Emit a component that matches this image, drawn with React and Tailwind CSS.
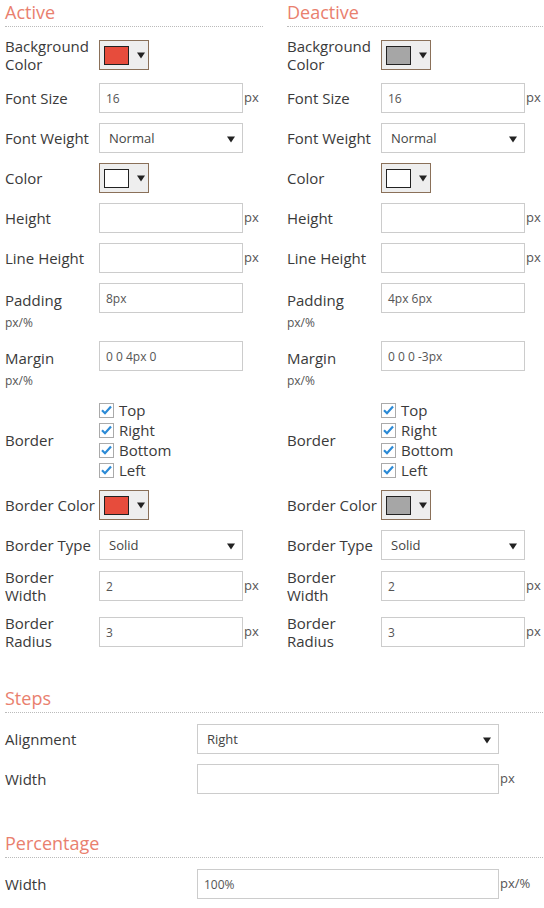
const font = { fontFamily: '"Open Sans", "Noto Sans", sans-serif' };

function Heading({ children }) {
  return (
    <div className="border-b border-dotted border-[#bbb] pb-[3px] pt-[1px]">
      <div className="text-[18px] leading-[22px] text-[#e9806e]">{children}</div>
    </div>
  );
}

function Row({ label, sub, children, top, className = '' }) {
  return (
    <div className={`flex ${top ? 'items-start' : 'items-center'} min-h-[30px] ${className}`}>
      <div className={`w-[94px] shrink-0 ${top ? 'pt-[8px]' : ''}`}>
        <div className="text-[15px] leading-[18px] text-[#3a3a3a]">{label}</div>
        {sub && <div className="mt-[6px] text-[12px] leading-[16px] text-[#555]">{sub}</div>}
      </div>
      {children}
    </div>
  );
}

function Arrow() {
  return (
    <svg width="8" height="8" viewBox="0 0 8 8">
      <path d="M0 1.5 L8 1.5 L4 7.5 Z" fill="#222" />
    </svg>
  );
}

function Picker({ color }) {
  return (
    <div className="flex h-[30px] w-[50px] items-center border border-[#8a7059] bg-[#eeeeee] pl-[4px]">
      <div className="h-[19px] w-[25px] border border-[#222]" style={{ background: color }} />
      <div className="ml-[8px] flex items-center">
        <Arrow />
      </div>
    </div>
  );
}

function Input({ value, unit, wide }) {
  return (
    <div className="flex items-center">
      <div
        className={`flex h-[30px] ${wide ? 'w-[302px]' : 'w-[144px]'} items-center border border-[#ccc] bg-white px-[6px] pt-[1px] text-[12px] text-[#555]`}
      >
        {value}
      </div>
      {unit && <span className="pl-[1px] text-[13px] text-[#555]">{unit}</span>}
    </div>
  );
}

function Select({ value, wide }) {
  return (
    <div
      className={`flex h-[30px] ${wide ? 'w-[302px]' : 'w-[144px]'} items-center justify-between border border-[#ccc] bg-white pl-[9px] pr-[7px] pt-[2px] text-[13px] text-[#444]`}
    >
      <span>{value}</span>
      <Arrow />
    </div>
  );
}

function Check({ label }) {
  return (
    <div className="flex h-[20px] items-center">
      <div className="flex h-[15px] w-[15px] items-center justify-center border border-[#aaa] bg-white">
        <svg width="11" height="10" viewBox="0 0 11 10">
          <path d="M1 5.2 L4 8.2 L10 1.5" fill="none" stroke="#2b8ad6" strokeWidth="2.2" />
        </svg>
      </div>
      <span className="ml-[5px] text-[15px] leading-[18px] text-[#3a3a3a]">{label}</span>
    </div>
  );
}

function Column({ title, color, padding, margin }) {
  return (
    <div>
      <Heading>{title}</Heading>
      <div className="mt-[10px] flex flex-col gap-[10px]">
        <Row label={<>Background<br />Color</>}>
          <Picker color={color} />
        </Row>
        <Row label="Font Size">
          <Input value="16" unit="px" />
        </Row>
        <Row label="Font Weight">
          <Select value="Normal" />
        </Row>
        <Row label="Color">
          <Picker color="#ffffff" />
        </Row>
        <Row label="Height">
          <Input value="" unit="px" />
        </Row>
        <Row label="Line Height">
          <Input value="" unit="px" />
        </Row>
        <Row label="Padding" sub="px/%" top>
          <Input value={padding} />
        </Row>
        <Row label="Margin" sub="px/%" top>
          <Input value={margin} />
        </Row>
        <div className="pt-[1px]">
          <Row label="Border">
            <div className="flex flex-col">
              <Check label="Top" />
              <Check label="Right" />
              <Check label="Bottom" />
              <Check label="Left" />
            </div>
          </Row>
        </div>
        <Row label="Border Color">
          <Picker color={color} />
        </Row>
        <Row label="Border Type">
          <Select value="Solid" />
        </Row>
        <Row label={<>Border<br />Width</>} className="-mt-[2px]">
          <Input value="2" unit="px" />
        </Row>
        <Row label={<>Border<br />Radius</>}>
          <Input value="3" unit="px" />
        </Row>
      </div>
    </div>
  );
}

function WideRow({ label, children }) {
  return (
    <div className="flex h-[30px] items-center">
      <div className="w-[192px] shrink-0 text-[15px] text-[#3a3a3a]">{label}</div>
      {children}
    </div>
  );
}

export default function App() {
  return (
    <div className="min-h-[908px] bg-white pl-[5px] pr-[1px]" style={font}>
      <div className="grid grid-cols-[258px_256px] gap-x-[24px]">
        <Column title="Active" color="#e74c3c" padding="8px" margin="0 0 4px 0" />
        <Column title="Deactive" color="#a6a6a6" padding="4px 6px" margin="0 0 0 -3px" />
      </div>

      <div className="mt-[36px]">
        <Heading>Steps</Heading>
        <div className="mt-[11px] flex flex-col gap-[10px]">
          <WideRow label="Alignment">
            <Select value="Right" wide />
          </WideRow>
          <WideRow label="Width">
            <Input value="" unit="px" wide />
          </WideRow>
        </div>
      </div>

      <div className="mt-[37px]">
        <Heading>Percentage</Heading>
        <div className="mt-[11px] flex flex-col gap-[10px]">
          <WideRow label="Width">
            <Input value="100%" unit="px/%" wide />
          </WideRow>
        </div>
      </div>
    </div>
  );
}
